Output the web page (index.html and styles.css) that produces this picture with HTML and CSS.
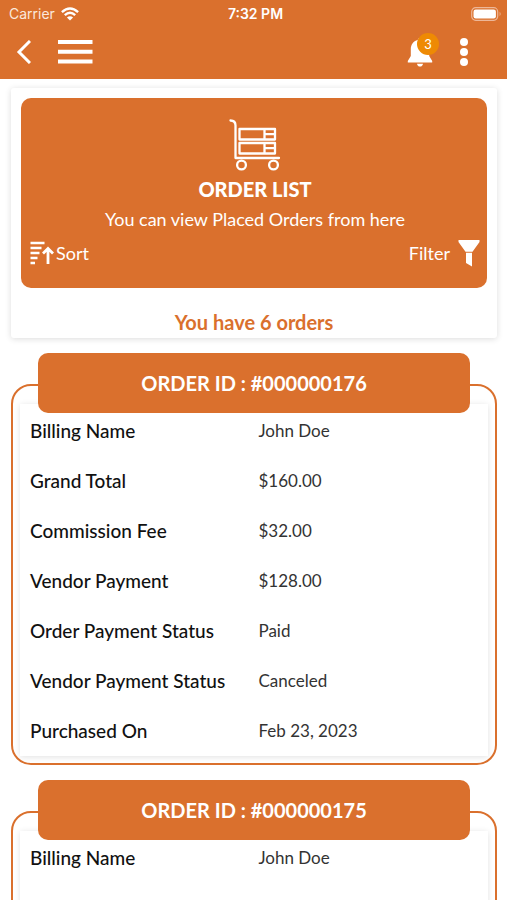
FILE: index.html
```html
<!DOCTYPE html>
<html lang="en">
<head>
<meta charset="utf-8">
<meta name="viewport" content="width=device-width, initial-scale=1">
<title>Order List</title>
<link rel="stylesheet" href="styles.css">
</head>
<body>
<header class="top">
  <div class="status">
    <span class="carrier">Carrier
      <svg width="18" height="14" viewBox="0 0 18 14" fill="none" stroke="#fff" stroke-width="2.4"><path d="M.9 5.2Q9-2.2 17.1 5.2M3.8 8.2Q9 3.4 14.2 8.2"/><path d="M9 13.6 5.9 10.5Q9 8 12.1 10.5Z" fill="#fff" stroke="none"/></svg>
    </span>
    <span class="time">7:32 PM</span>
    <span class="battery">
      <svg width="31" height="14" viewBox="0 0 31 14"><rect x=".7" y=".7" width="26" height="12.6" rx="4" fill="none" stroke="#edb798" stroke-width="1.2"/><rect x="2.5" y="2.5" width="22.4" height="9" rx="2.2" fill="#fff"/><path d="M28.6 4.8q2 2.2 0 4.4z" fill="#edb798"/></svg>
    </span>
  </div>
  <nav class="bar">
    <button class="icon" aria-label="Back"><svg width="16" height="24" viewBox="0 0 16 24" fill="none" stroke="#fff" stroke-width="3"><path d="M15 1 4 12 15 23"/></svg></button>
    <button class="icon menu" aria-label="Menu"><svg width="36" height="26" viewBox="0 0 36 26" fill="#fff"><path d="M1 1h34.500v4h-34.500zM1 10.700h34.500v4h-34.500zM1 20.500h34.500v4h-34.500z"/></svg></button>
    <button class="icon bell" aria-label="Notifications"><svg width="26" height="30" viewBox="0 0 26 30" fill="#fff"><path d="M13 1c-1.500 0-2.200 1-2.200 2C6 4.200 3.800 8 3.800 12.500V19L.8 24v1.500h24.400V24l-3-5v-6.500C22.200 8 20 4.200 15.200 3c0-1-.7-2-2.200-2zM10 26.800h6q-.5 2.800-3 2.800t-3-2.800z"/></svg><span class="badge">3</span></button>
    <button class="icon" aria-label="More"><svg width="10" height="30" viewBox="0 0 10 30" fill="#fff"><circle cx="5" cy="5" r="4"/><circle cx="5" cy="15" r="4"/><circle cx="5" cy="25" r="4"/></svg></button>
  </nav>
</header>
<main>
  <section class="summary">
    <div class="panel">
      <svg class="cart" width="52" height="54" viewBox="0 0 52 54" fill="none" stroke="#fff" stroke-width="2.300" stroke-linecap="round" stroke-linejoin="round"><path d="M1.500 2.500q5 0 5 5V40H50"/><path d="M10.500 11H46v10.500H10.500zM10.500 25H46v10.500H10.500zM35.500 11v10.500M35.500 25v10.500M35.500 16.200H46M35.500 30.200H46"/><circle cx="12.500" cy="47" r="4.400"/><circle cx="44.500" cy="47" r="4.400"/></svg>
      <h1>ORDER LIST</h1>
      <p>You can view Placed Orders from here</p>
      <div class="actions">
        <button><svg width="24" height="24" viewBox="0 0 24 24" fill="none" stroke="#fff" stroke-width="2.300"><path d="M.5 2h14M.5 7h11M.5 12h9M.5 17h7M.5 22h4.500"/><path d="M18 23V8M13 12.500 18 7.500l5 5" stroke-width="2.800"/></svg>Sort</button>
        <button class="filter">Filter<svg width="22" height="28" viewBox="0 0 22 28" fill="#fff"><path d="M.5 1h21v2L14.500 12.800h-7L.5 3zM8 13.800h6v13.700L8 24z"/></svg></button>
      </div>
    </div>
    <p class="count">You have 6 orders</p>
  </section>

  <article class="order">
    <h2>ORDER ID : #000000176</h2>
    <div class="frame">
      <div class="details">
        <table>
          <tr><th scope="row">Billing Name</th><td>John Doe</td></tr>
          <tr><th scope="row">Grand Total</th><td>$160.00</td></tr>
          <tr><th scope="row">Commission Fee</th><td>$32.00</td></tr>
          <tr><th scope="row">Vendor Payment</th><td>$128.00</td></tr>
          <tr><th scope="row">Order Payment Status</th><td>Paid</td></tr>
          <tr><th scope="row">Vendor Payment Status</th><td>Canceled</td></tr>
          <tr><th scope="row">Purchased On</th><td>Feb 23, 2023</td></tr>
        </table>
      </div>
    </div>
  </article>

  <article class="order partial">
    <h2>ORDER ID : #000000175</h2>
    <div class="frame">
      <div class="details">
        <table>
          <tr><th scope="row">Billing Name</th><td>John Doe</td></tr>
        </table>
      </div>
    </div>
  </article>
</main>
</body>
</html>
```
FILE: styles.css
```css
* {
  box-sizing: border-box;
}

body {
  margin: 0;
  background: #fff;
  color: #111;
  font-family: Lato, "Liberation Sans", sans-serif;
  font-size: 18px;
  line-height: 24px;
}

h1, h2, p {
  margin: 0;
}

svg {
  display: block;
}

button {
  display: flex;
  align-items: center;
  padding: 0;
  border: 0;
  background: none;
  color: inherit;
  font: inherit;
}

.top {
  height: 79px;
  background: #da702d;
  color: #fff;
}

.status {
  display: grid;
  grid-template-columns: 1fr auto 1fr;
  align-items: center;
  height: 27px;
  padding: 0 5px 0 9px;
  font-family: Inter, "Liberation Sans", sans-serif;
  font-size: 14px;
}

.carrier {
  display: flex;
  align-items: center;
  gap: 6px;
  color: #fbe8dc;
}

.time {
  font-weight: 600;
}

.battery {
  justify-self: end;
}

.bar {
  display: flex;
  align-items: center;
  height: 50px;
  padding: 0 38px 0 15px;
}

.menu {
  margin-left: 26px;
}

.bell {
  position: relative;
  margin: 0 26px 0 auto;
}

.badge {
  position: absolute;
  top: -4px;
  right: -6px;
  width: 22px;
  border-radius: 50%;
  background: #ee8a04;
  font-size: 13px;
  line-height: 22px;
  text-align: center;
}

main {
  padding: 9px 10px 0 11px;
}

.summary {
  padding: 10px 10px 4px;
  border-radius: 3px;
  box-shadow: 0 1px 6px rgba(0, 0, 0, 0.14);
}

.panel {
  display: flex;
  flex-direction: column;
  align-items: center;
  height: 190px;
  padding: 20px 7px 0 9px;
  border-radius: 10px;
  background: #da702d;
  color: #fff;
}

.panel h1 {
  margin-top: 5px;
  font-size: 20px;
  font-weight: 900;
  line-height: 24px;
}

.panel p {
  margin-top: 6px;
}

.actions {
  display: flex;
  justify-content: space-between;
  align-self: stretch;
  margin-top: 8px;
}

.actions button {
  gap: 2px;
}

.actions .filter {
  gap: 8px;
}

.count {
  margin-top: 22px;
  color: #da702d;
  font-size: 20px;
  font-weight: 700;
  text-align: center;
}

.order {
  margin-top: 15px;
}

.order h2 {
  position: relative;
  margin: 0 27px;
  padding: 18px 0;
  border-radius: 10px;
  background: #da702d;
  color: #fff;
  font-size: 20px;
  font-weight: 700;
  text-align: center;
}

.frame {
  margin-top: -29px;
  padding: 18px 7px 7px;
  border: 2px solid #da702d;
  border-radius: 20px;
}

.details {
  padding: 2px 10px 0;
  box-shadow: 0 1px 6px rgba(0, 0, 0, 0.12);
}

.partial .details {
  min-height: 352px;
}

table {
  width: 100%;
  border-collapse: collapse;
  table-layout: fixed;
}

th, td {
  height: 50px;
  padding: 0;
  text-align: left;
}

th {
  width: 51%;
  font-size: 19px;
  font-weight: 500;
}

td {
  color: #333;
  font-size: 17px;
}
```
